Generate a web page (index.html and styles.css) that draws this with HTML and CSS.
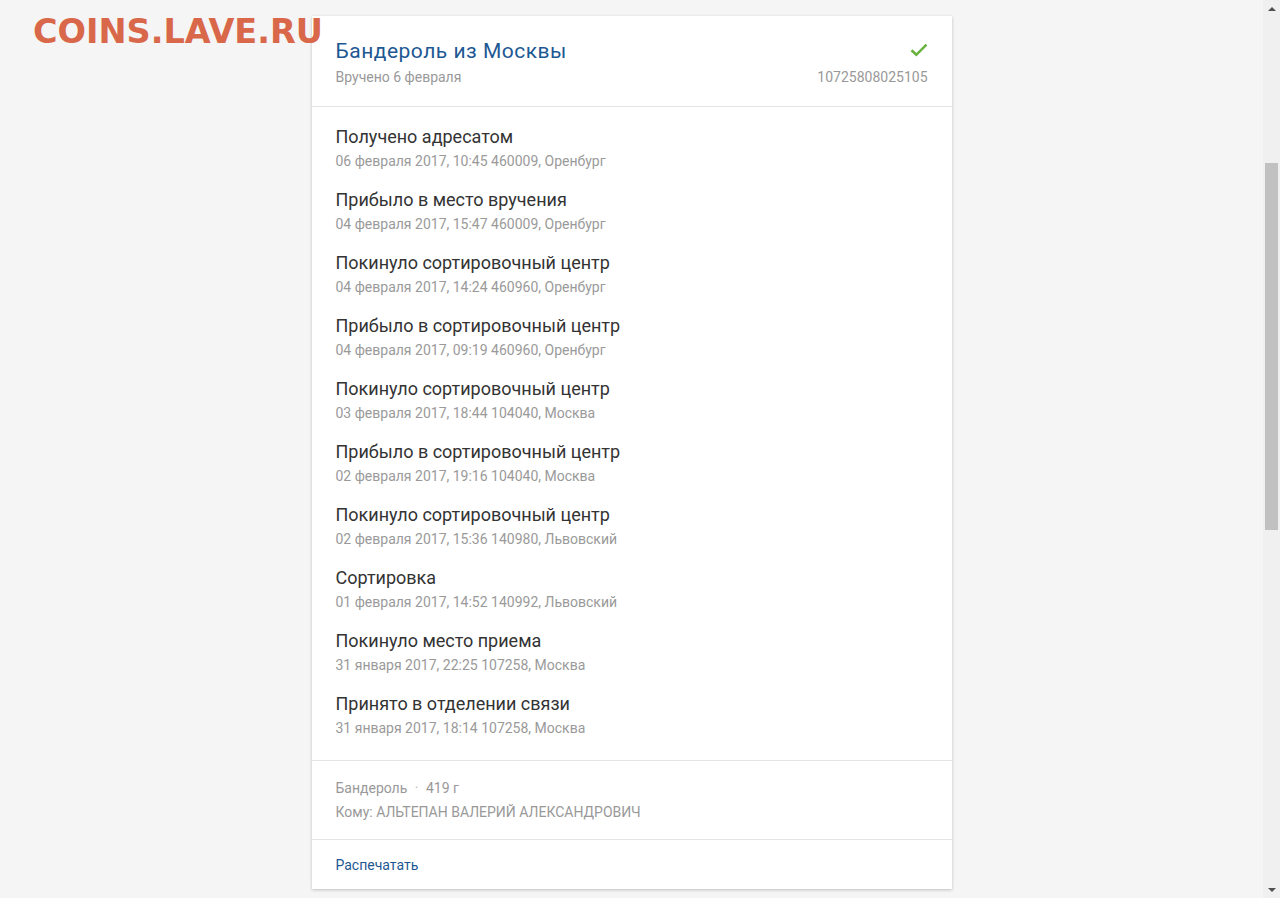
FILE: index.html
```html
<!DOCTYPE html>
<html lang="ru">
<head>
<meta charset="utf-8">
<title>Бандероль из Москвы</title>
<link rel="stylesheet" href="styles.css">
</head>
<body>
<div class="page">
  <main class="main">
    <section class="card">
      <header class="card-head">
        <div class="head-left">
          <h1 class="title">Бандероль из Москвы</h1>
          <div class="sub">Вручено 6 февраля</div>
        </div>
        <div class="head-right">
          <svg class="check" width="18" height="14" viewBox="0 0 18 14"><path d="M1.5 7.2 L6.3 11.8 L16.5 1.6" fill="none" stroke="#6ab23f" stroke-width="2.6"/></svg>
          <div class="sub">10725808025105</div>
        </div>
      </header>
      <ul class="events">
        <li class="event"><div class="ev-title">Получено адресатом</div><div class="ev-sub">06 февраля 2017, 10:45 460009, Оренбург</div></li>
        <li class="event"><div class="ev-title">Прибыло в место вручения</div><div class="ev-sub">04 февраля 2017, 15:47 460009, Оренбург</div></li>
        <li class="event"><div class="ev-title">Покинуло сортировочный центр</div><div class="ev-sub">04 февраля 2017, 14:24 460960, Оренбург</div></li>
        <li class="event"><div class="ev-title">Прибыло в сортировочный центр</div><div class="ev-sub">04 февраля 2017, 09:19 460960, Оренбург</div></li>
        <li class="event"><div class="ev-title">Покинуло сортировочный центр</div><div class="ev-sub">03 февраля 2017, 18:44 104040, Москва</div></li>
        <li class="event"><div class="ev-title">Прибыло в сортировочный центр</div><div class="ev-sub">02 февраля 2017, 19:16 104040, Москва</div></li>
        <li class="event"><div class="ev-title">Покинуло сортировочный центр</div><div class="ev-sub">02 февраля 2017, 15:36 140980, Львовский</div></li>
        <li class="event"><div class="ev-title">Сортировка</div><div class="ev-sub">01 февраля 2017, 14:52 140992, Львовский</div></li>
        <li class="event"><div class="ev-title">Покинуло место приема</div><div class="ev-sub">31 января 2017, 22:25 107258, Москва</div></li>
        <li class="event"><div class="ev-title">Принято в отделении связи</div><div class="ev-sub">31 января 2017, 18:14 107258, Москва</div></li>
      </ul>
      <div class="info">
        <div class="info-line">Бандероль <span class="dot">·</span> 419 г</div>
        <div class="info-line">Кому: АЛЬТЕПАН ВАЛЕРИЙ АЛЕКСАНДРОВИЧ</div>
      </div>
      <div class="foot">
        <a class="print" href="#">Распечатать</a>
      </div>
    </section>
  </main>
  <div class="scrollbar">
    <div class="arrow arrow-up"></div>
    <div class="track"><div class="thumb"></div></div>
    <div class="arrow arrow-down"></div>
  </div>
</div>
<div class="watermark">COINS.LAVE.RU</div>
</body>
</html>
```
FILE: styles.css
```css
html, body {
  margin: 0;
  padding: 0;
  height: 898px;
  overflow: hidden;
  background: #f5f5f5;
  font-family: Roboto, "Liberation Sans", Arial, sans-serif;
}
.page {
  display: flex;
  height: 898px;
}
.main {
  flex: 1;
  display: flex;
  justify-content: center;
  padding-top: 16px;
}
.card {
  width: 640px;
  align-self: flex-start;
  background: #fff;
  box-shadow: 0 1px 3px rgba(0,0,0,0.22);
}
.card-head {
  display: flex;
  justify-content: space-between;
  padding: 23px 24px 19px;
  border-bottom: 1px solid #e4e4e4;
}
.title {
  margin: 0;
  font-size: 21px;
  letter-spacing: 0.5px;
  font-weight: 400;
  line-height: 24px;
  color: #1d5893;
}
.sub {
  font-size: 14px;
  line-height: 20px;
  color: #999;
}
.head-left .sub { margin-top: 4px; }
.head-right {
  display: flex;
  flex-direction: column;
  align-items: flex-end;
}
.check {
  display: block;
  margin-top: 4px;
  margin-bottom: 10px;
}
.events {
  list-style: none;
  margin: 0;
  padding: 18px 24px 5px;
  border-bottom: 1px solid #e4e4e4;
}
.event {
  margin-bottom: 17px;
}
.ev-title {
  font-size: 18px;
  line-height: 24px;
  color: #333;
}
.ev-sub {
  margin-top: 2px;
  font-size: 14px;
  line-height: 20px;
  color: #9a9a9a;
}
.info {
  padding: 17px 24px 17px;
  border-bottom: 1px solid #e4e4e4;
  display: flex;
  flex-direction: column;
  gap: 4px;
}
.info-line {
  font-size: 14px;
  line-height: 20px;
  color: #999;
}
.dot {
  margin: 0 4px;
  color: #bbb;
}
.foot {
  padding: 15px 24px 14px;
}
.print {
  font-size: 14px;
  line-height: 20px;
  color: #1d5893;
  text-decoration: none;
}
.scrollbar {
  width: 17px;
  background: #f0f0f0;
  display: flex;
  flex-direction: column;
}
.arrow {
  height: 17px;
  display: flex;
  justify-content: center;
  align-items: center;
}
.arrow-up::before {
  content: "";
  border-left: 4px solid transparent;
  border-right: 4px solid transparent;
  border-bottom: 4px solid #505050;
}
.arrow-down::before {
  content: "";
  border-left: 4px solid transparent;
  border-right: 4px solid transparent;
  border-top: 4px solid #505050;
}
.track {
  flex: 1;
  padding: 146px 2px 0;
}
.thumb {
  height: 367px;
  background: #c1c1c1;
}
.watermark {
  position: absolute;
  left: 33px;
  top: 12px;
  font-family: "DejaVu Sans", Verdana, sans-serif;
  font-weight: 700;
  font-size: 33.5px;
  line-height: 40px;
  color: #d9674a;
}
```
